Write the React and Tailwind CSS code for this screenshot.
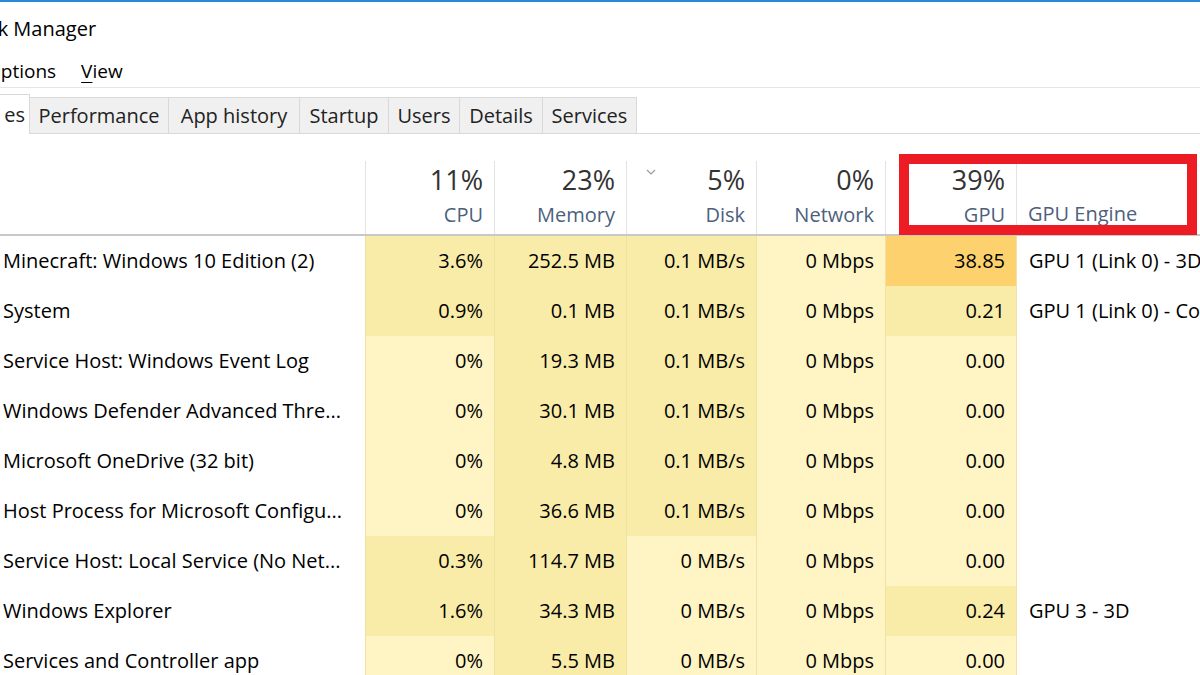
const shade = {
  l: 'bg-[#fff4c4]',
  m: 'bg-[#f9eca8]',
  o: 'bg-[#fdd26e]',
};

const rows = [
  { name: 'Minecraft: Windows 10 Edition (2)', cpu: ['3.6%', 'm'], mem: '252.5 MB', disk: ['0.1 MB/s', 'm'], net: '0 Mbps', gpu: ['38.85', 'o'], eng: 'GPU 1 (Link 0) - 3D' },
  { name: 'System', cpu: ['0.9%', 'm'], mem: '0.1 MB', disk: ['0.1 MB/s', 'm'], net: '0 Mbps', gpu: ['0.21', 'm'], eng: 'GPU 1 (Link 0) - Copy' },
  { name: 'Service Host: Windows Event Log', cpu: ['0%', 'l'], mem: '19.3 MB', disk: ['0.1 MB/s', 'm'], net: '0 Mbps', gpu: ['0.00', 'l'], eng: '' },
  { name: 'Windows Defender Advanced Thre...', cpu: ['0%', 'l'], mem: '30.1 MB', disk: ['0.1 MB/s', 'm'], net: '0 Mbps', gpu: ['0.00', 'l'], eng: '' },
  { name: 'Microsoft OneDrive (32 bit)', cpu: ['0%', 'l'], mem: '4.8 MB', disk: ['0.1 MB/s', 'm'], net: '0 Mbps', gpu: ['0.00', 'l'], eng: '' },
  { name: 'Host Process for Microsoft Configu...', cpu: ['0%', 'l'], mem: '36.6 MB', disk: ['0.1 MB/s', 'm'], net: '0 Mbps', gpu: ['0.00', 'l'], eng: '' },
  { name: 'Service Host: Local Service (No Net...', cpu: ['0.3%', 'm'], mem: '114.7 MB', disk: ['0 MB/s', 'l'], net: '0 Mbps', gpu: ['0.00', 'l'], eng: '' },
  { name: 'Windows Explorer', cpu: ['1.6%', 'm'], mem: '34.3 MB', disk: ['0 MB/s', 'l'], net: '0 Mbps', gpu: ['0.24', 'm'], eng: 'GPU 3 - 3D' },
  { name: 'Services and Controller app', cpu: ['0%', 'l'], mem: '5.5 MB', disk: ['0 MB/s', 'l'], net: '0 Mbps', gpu: ['0.00', 'l'], eng: '' },
];

const tabs = [
  { label: 'Performance', w: 'w-[139px]' },
  { label: 'App history', w: 'w-[131px]' },
  { label: 'Startup', w: 'w-[89px]' },
  { label: 'Users', w: 'w-[71px]' },
  { label: 'Details', w: 'w-[83px]' },
  { label: 'Services', w: 'w-[94px]' },
];

const headers = [
  { pct: '11%', label: 'CPU' },
  { pct: '23%', label: 'Memory' },
  { pct: '5%', label: 'Disk', sort: true },
  { pct: '0%', label: 'Network' },
  { pct: '39%', label: 'GPU' },
];

const cols = 'grid grid-cols-[365px_129px_132px_130px_129px_131px_1fr]';

function Cell({ value, tone }) {
  return (
    <div className={`${shade[tone]} border-l border-[#f0e2a2] flex items-center justify-end pr-[11px] text-[20px] text-black`}>
      {value}
    </div>
  );
}

export default function App() {
  return (
    <div className="w-[1200px] h-[675px] overflow-hidden bg-white relative font-['Open_Sans',sans-serif] text-black">
      <div className="h-[2px] bg-[#2b88d8]" />

      <div className="h-[54px] flex items-center">
        <span className="ml-[-34px] text-[20px]">Task Manager</span>
      </div>

      <div className="h-[32px] flex items-center border-b border-[#e6e6e6] text-[19px]">
        <span className="ml-[-14px]">Options</span>
        <span className="ml-[25px]"><span className="underline underline-offset-4">V</span>iew</span>
      </div>

      <div className="h-[46px] flex items-end">
        <div className="w-[30px] h-[40px] bg-white border-r border-t border-[#d9d9d9] flex items-center justify-end pr-[4px] text-[20px] text-[#222]">
          es
        </div>
        {tabs.map((t) => (
          <div key={t.label} className={`${t.w} h-[37px] bg-[#f0f0f0] border border-l-0 border-[#d9d9d9] flex items-center justify-center text-[20px] text-[#222]`}>
            {t.label}
          </div>
        ))}
        <div className="flex-1 h-[37px] border-b border-[#d9d9d9]" />
      </div>

      <div className={`${cols} mt-[27px] border-b-2 border-[#c8c8c8]`}>
        <div className="h-[73px]" />
        {headers.map((h) => (
          <div key={h.label} className="h-[73px] border-l border-[#e3e3e3] flex flex-col items-end pr-[11px] relative">
            {h.sort && (
              <svg className="absolute left-[19px] top-[8px]" width="10" height="6" viewBox="0 0 10 6">
                <path d="M1 1 L5 5 L9 1" fill="none" stroke="#9a9a9a" strokeWidth="1.2" />
              </svg>
            )}
            <div className="pt-[4px] text-[27px] leading-[30px] text-[#333]">{h.pct}</div>
            <div className="mt-[8px] text-[20px] leading-[24px] text-[#4e5f7c]">{h.label}</div>
          </div>
        ))}
        <div className="h-[73px] border-l border-[#e3e3e3] flex flex-col justify-end pl-[11px] pb-[8px]">
          <div className="text-[20px] leading-[24px] text-[#4e5f7c]">GPU Engine</div>
        </div>
      </div>

      {rows.map((r) => (
        <div key={r.name} className={`${cols} h-[50px]`}>
          <div className="flex items-center pl-[3px] text-[20px] whitespace-nowrap overflow-hidden">{r.name}</div>
          <Cell value={r.cpu[0]} tone={r.cpu[1]} />
          <Cell value={r.mem} tone="m" />
          <Cell value={r.disk[0]} tone={r.disk[1]} />
          <Cell value={r.net} tone="l" />
          <Cell value={r.gpu[0]} tone={r.gpu[1]} />
          <div className="flex items-center pl-[12px] text-[20px] whitespace-nowrap overflow-hidden border-l border-[#f0e2a2]">{r.eng}</div>
        </div>
      ))}

      <div className="absolute left-[899px] top-[154px] w-[298px] h-[81px] border-[10px] border-[#ed1c24]" />
    </div>
  );
}
